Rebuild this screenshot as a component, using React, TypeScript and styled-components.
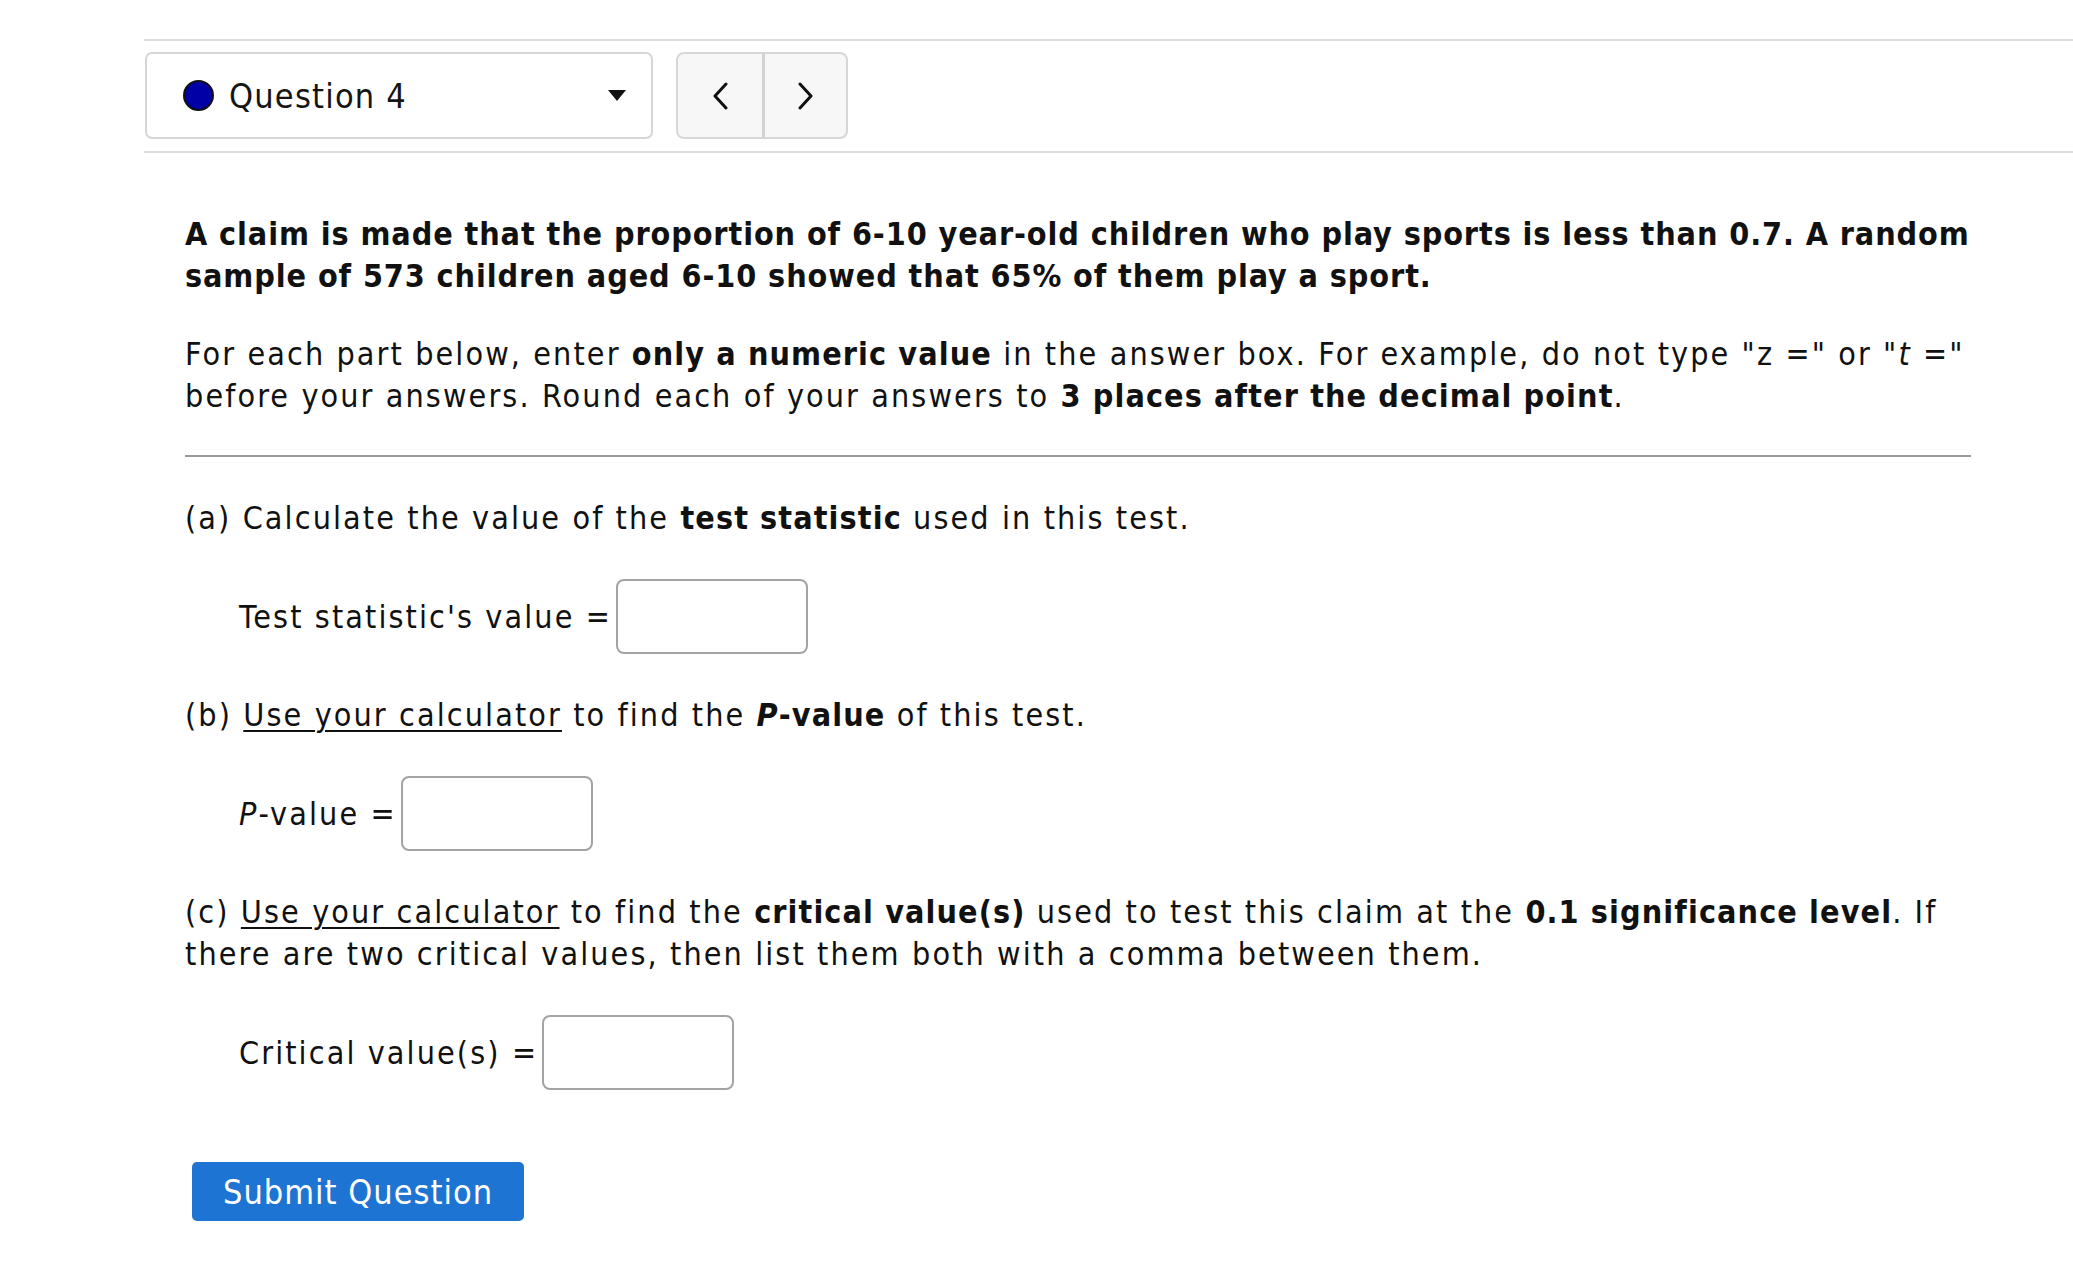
import styled, { createGlobalStyle } from 'styled-components';

const FONT = `"DejaVu Sans Condensed", "DejaVu Sans", Tahoma, sans-serif`;

const GlobalStyle = createGlobalStyle`
  html, body {
    margin: 0;
    padding: 0;
    background: #ffffff;
  }

  body {
    font-family: ${FONT};
    font-stretch: condensed;
    color: #111111;
  }
`;

const Page = styled.div`
  padding: 39px 0 40px 144px;
`;

const Header = styled.header`
  display: flex;
  align-items: center;
  gap: 23px;
  padding: 11px 0 12px 1px;
  border-top: 2px solid #dcdcdc;
  border-bottom: 2px solid #dcdcdc;
`;

const QuestionSelect = styled.div`
  box-sizing: border-box;
  display: flex;
  align-items: center;
  width: 508px;
  height: 87px;
  padding: 0 25px 0 36px;
  border: 2px solid #d6d6d6;
  border-radius: 7px;
  background: #ffffff;
`;

const StatusDot = styled.span`
  box-sizing: border-box;
  width: 31px;
  height: 31px;
  border-radius: 50%;
  background: #0000a6;
  border: 2px solid #111111;
`;

const QuestionLabel = styled.span`
  flex: 1;
  margin-left: 15px;
  font-size: 34px;
  letter-spacing: 1.2px;
  color: #151515;
`;

const Caret = styled.span`
  width: 0;
  height: 0;
  border-left: 9px solid transparent;
  border-right: 9px solid transparent;
  border-top: 11px solid #111111;
`;

const NavGroup = styled.div`
  box-sizing: border-box;
  display: flex;
  height: 87px;
  border: 2px solid #d6d6d6;
  border-radius: 8px;
  background: #f7f7f7;
  overflow: hidden;
`;

const NavButton = styled.button<{ $divider?: boolean }>`
  display: flex;
  align-items: center;
  justify-content: center;
  width: 84px;
  padding: 0;
  border: none;
  border-left: ${(p) => (p.$divider ? '3px solid #d2d2d2' : 'none')};
  background: transparent;
  cursor: pointer;
`;

const Content = styled.main`
  display: flex;
  flex-direction: column;
  width: 1795px;
  margin: 60px 0 0 41px;
  font-size: 32px;
  line-height: 42px;
  letter-spacing: 2.1px;
`;

const Intro = styled.div`
  display: flex;
  flex-direction: column;
  gap: 36px;
`;

const Paragraph = styled.p<{ $bold?: boolean }>`
  margin: 0;
  font-weight: ${(p) => (p.$bold ? 700 : 400)};
  letter-spacing: ${(p) => (p.$bold ? '0.9px' : '2.1px')};
`;

const Strong = styled.b`
  font-weight: 700;
  letter-spacing: 1.1px;
`;

const Divider = styled.hr`
  width: 1786px;
  margin: 38px 0 40px;
  border: none;
  border-top: 2px solid #9a9a9a;
`;

const Parts = styled.div`
  display: flex;
  flex-direction: column;
  gap: 40px;
`;

const Link = styled.a`
  color: inherit;
  text-decoration: underline;
  text-decoration-thickness: 2px;
  text-underline-offset: 4px;
`;

const AnswerRow = styled.div`
  display: flex;
  align-items: center;
  padding-left: 54px;
`;

const AnswerBox = styled.input`
  box-sizing: border-box;
  width: 192px;
  height: 75px;
  margin-left: 4px;
  border: 2px solid #a3a3a3;
  border-radius: 8px;
  background: #ffffff;
  font-family: ${FONT};
  font-size: 30px;
`;

const SubmitButton = styled.button`
  align-self: flex-start;
  box-sizing: border-box;
  width: 332px;
  height: 59px;
  margin: 72px 0 0 7px;
  border: none;
  border-radius: 5px;
  background: #1e74d2;
  color: #ffffff;
  font-family: ${FONT};
  font-stretch: condensed;
  font-size: 34px;
  letter-spacing: 1px;
  cursor: pointer;
`;

function Chevron({ left }: { left?: boolean }) {
  return (
    <svg width="18" height="28" viewBox="0 0 18 28" fill="none">
      <polyline
        points={left ? '15,2 4,14 15,26' : '3,2 14,14 3,26'}
        stroke="#111"
        strokeWidth="3"
        strokeLinecap="round"
        strokeLinejoin="round"
      />
    </svg>
  );
}

function App() {
  return (
    <>
      <GlobalStyle />
      <Page>
        <Header>
          <QuestionSelect>
            <StatusDot />
            <QuestionLabel>Question 4</QuestionLabel>
            <Caret />
          </QuestionSelect>
          <NavGroup>
            <NavButton aria-label="Previous question">
              <Chevron left />
            </NavButton>
            <NavButton $divider aria-label="Next question">
              <Chevron />
            </NavButton>
          </NavGroup>
        </Header>

        <Content>
          <Intro>
            <Paragraph $bold>
              A claim is made that the proportion of 6-10 year-old children who play sports is less
              than 0.7. A random sample of 573 children aged 6-10 showed that 65% of them play a sport.
            </Paragraph>
            <Paragraph>
              For each part below, enter <Strong>only a numeric value</Strong> in the answer box. For
              example, do not type "z =" or "<i>t</i> =" before your answers. Round each of your
              answers to <Strong>3 places after the decimal point</Strong>.
            </Paragraph>
          </Intro>

          <Divider />

          <Parts>
            <Paragraph>
              (a) Calculate the value of the <Strong>test statistic</Strong> used in this test.
            </Paragraph>
            <AnswerRow>
              Test statistic's value =
              <AnswerBox type="text" />
            </AnswerRow>

            <Paragraph>
              (b) <Link>Use your calculator</Link> to find the{' '}
              <Strong>
                <i>P</i>-value
              </Strong>{' '}
              of this test.
            </Paragraph>
            <AnswerRow>
              <span>
                <i>P</i>-value =
              </span>
              <AnswerBox type="text" />
            </AnswerRow>

            <Paragraph>
              (c) <Link>Use your calculator</Link> to find the <Strong>critical value(s)</Strong> used
              to test this claim at the <Strong>0.1 significance level</Strong>. If there are two
              critical values, then list them both with a comma between them.
            </Paragraph>
            <AnswerRow>
              Critical value(s) =
              <AnswerBox type="text" />
            </AnswerRow>
          </Parts>

          <SubmitButton>Submit Question</SubmitButton>
        </Content>
      </Page>
    </>
  );
}

export default App;
